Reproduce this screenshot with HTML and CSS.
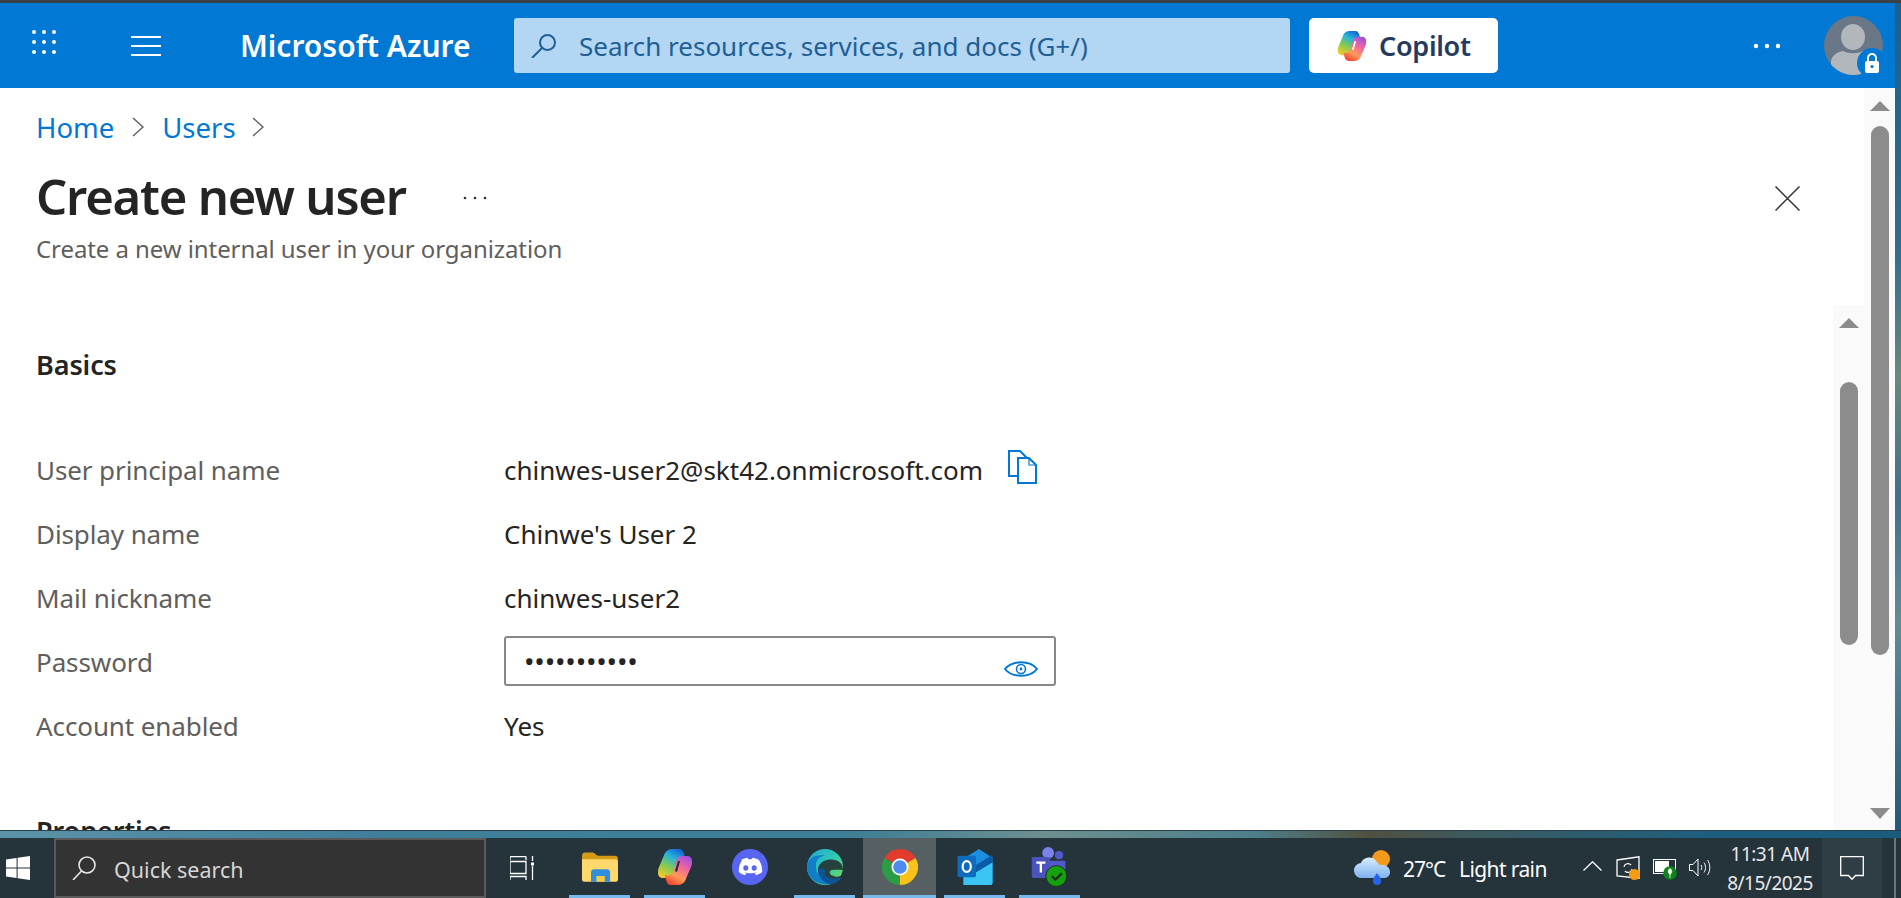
FILE: index.html
```html
<!DOCTYPE html>
<html lang="en">
<head>
    <meta charset="UTF-8">
    <meta name="viewport" content="width=device-width, initial-scale=1.0">
    <title>Create new user - Microsoft Azure</title>
    <link rel="stylesheet" href="styles.css">
</head>
<body>

<svg class="defs" width="0" height="0">
    <defs>
        <linearGradient id="copilotLeft" x1="0.7" y1="0" x2="0.2" y2="1">
            <stop offset="0" stop-color="#1668dc"/>
            <stop offset="0.3" stop-color="#27b5d8"/>
            <stop offset="0.65" stop-color="#8ccb4a"/>
            <stop offset="1" stop-color="#f5c92f"/>
        </linearGradient>
        <linearGradient id="copilotRight" x1="0.3" y1="1" x2="0.8" y2="0">
            <stop offset="0" stop-color="#f04a30"/>
            <stop offset="0.3" stop-color="#ff9a58"/>
            <stop offset="0.65" stop-color="#ee62a4"/>
            <stop offset="1" stop-color="#9a52e0"/>
        </linearGradient>
        <linearGradient id="edgeTop" x1="0" y1="0" x2="1" y2="0.8">
            <stop offset="0" stop-color="#1fa8d8"/>
            <stop offset="0.6" stop-color="#33c8b0"/>
            <stop offset="1" stop-color="#6ada5e"/>
        </linearGradient>
        <linearGradient id="cloud" x1="0" y1="0" x2="0" y2="1">
            <stop offset="0" stop-color="#d8ecff"/>
            <stop offset="1" stop-color="#7fb2f0"/>
        </linearGradient>
        <symbol id="copilot" viewBox="0 0 34 36">
            <path fill="url(#copilotLeft)" d="M14 0h7c3 0 4 2 5 5l1 5c-4-1-7 0-8 3l-4 13c-1 2-2 3-5 3H5c-3 0-5-2-5-5 0-2 0-4 1-6l6-14c1-2 4-4 7-4z"/>
            <path fill="url(#copilotRight)" d="M20 36h-7c-3 0-4-2-5-5l-1-5c4 1 7 0 8-3l4-13c1-2 2-3 5-3h5c3 0 5 2 5 5 0 2 0 4-1 6l-6 14c-1 2-4 4-7 4z"/>
            <path class="copilot-slit" d="M17 22l3-10h2l-3 11z"/>
        </symbol>
    </defs>
</svg>

<div class="top-strip"></div>

<div class="desktop-row">
    <div class="window">
        <header class="portal-bar">
            <svg class="icon-grid" viewBox="0 0 24 24" fill="#fff">
                <circle cx="2" cy="2" r="2"/><circle cx="12" cy="2" r="2"/><circle cx="22" cy="2" r="2"/>
                <circle cx="2" cy="12" r="2"/><circle cx="12" cy="12" r="2"/><circle cx="22" cy="12" r="2"/>
                <circle cx="2" cy="22" r="2"/><circle cx="12" cy="22" r="2"/><circle cx="22" cy="22" r="2"/>
            </svg>
            <svg class="icon-menu" viewBox="0 0 30 20" stroke="#fff" stroke-width="2">
                <path d="M0 1h30M0 10h30M0 19h30"/>
            </svg>
            <div class="brand">Microsoft Azure</div>
            <div class="search">
                <svg class="icon-search" viewBox="0 0 26 24" fill="none" stroke="#1e5f96" stroke-width="2">
                    <circle cx="16.5" cy="8.5" r="7.5"/>
                    <path d="M11 14L1 24"/>
                </svg>
                <span>Search resources, services, and docs (G+/)</span>
            </div>
            <div class="copilot-btn">
                <svg class="icon-copilot"><use href="#copilot"/></svg>
                <span>Copilot</span>
            </div>
            <svg class="icon-more" viewBox="0 0 28 6" fill="#fff">
                <circle cx="3" cy="3" r="2.2"/><circle cx="14" cy="3" r="2.2"/><circle cx="25" cy="3" r="2.2"/>
            </svg>
            <svg class="avatar" viewBox="0 0 59 59">
                <defs><clipPath id="avatarClip"><circle cx="29.5" cy="29.5" r="29.5"/></clipPath></defs>
                <g clip-path="url(#avatarClip)">
                    <rect width="59" height="59" fill="#6a7787"/>
                    <ellipse cx="29" cy="21" rx="12" ry="13" fill="#b2b7bc"/>
                    <path d="M7 59V46c0-6 6-10 12-11 6 3 14 3 20 0 6 1 12 5 12 11v13z" fill="#b2b7bc"/>
                </g>
                <circle cx="48" cy="47" r="15" fill="#0078d4"/>
                <rect x="41" y="45" width="14" height="12" rx="2" fill="#fff"/>
                <path d="M44 45v-3a4 4 0 0 1 8 0v3" fill="none" stroke="#fff" stroke-width="2"/>
                <circle cx="48" cy="50.5" r="1.6" fill="#0078d4"/>
            </svg>
        </header>

        <main class="portal-main">
            <div class="blade">
                <div class="blade-head">
                    <nav class="breadcrumb">
                        <a>Home</a>
                        <svg class="chevron" viewBox="0 0 12 20" fill="none" stroke="#605e5c" stroke-width="1.4"><path d="M1 1l10 9-10 9"/></svg>
                        <a>Users</a>
                        <svg class="chevron chevron-last" viewBox="0 0 12 20" fill="none" stroke="#605e5c" stroke-width="1.4"><path d="M1 1l10 9-10 9"/></svg>
                    </nav>
                    <div class="title-row">
                        <h1>Create new user</h1>
                        <svg class="icon-title-more" viewBox="0 0 24 4" fill="#323130">
                            <circle cx="2" cy="2" r="1.3"/><circle cx="12" cy="2" r="1.3"/><circle cx="22" cy="2" r="1.3"/>
                        </svg>
                        <svg class="icon-close" viewBox="0 0 25 25" stroke="#323130" stroke-width="1.5">
                            <path d="M0.5 0.5l24 24M24.5 0.5l-24 24"/>
                        </svg>
                    </div>
                    <p class="subtitle">Create a new internal user in your organization</p>
                </div>

                <div class="blade-body">
                    <div class="review">
                        <h2 class="section first">Basics</h2>
                        <div class="rows">
                            <div class="row">
                                <div class="label">User principal name</div>
                                <div class="value">chinwes-user2@skt42.onmicrosoft.com
                                    <svg class="icon-copy" viewBox="0 0 29 34" fill="none" stroke="#0078d4" stroke-width="2">
                                        <path d="M10 26H1V1h11l7 7"/>
                                        <path d="M10 8h11l7 7v18H10z"/>
                                        <path d="M21 8v7h7" stroke-width="1.2"/>
                                    </svg>
                                </div>
                            </div>
                            <div class="row">
                                <div class="label">Display name</div>
                                <div class="value">Chinwe's User 2</div>
                            </div>
                            <div class="row">
                                <div class="label">Mail nickname</div>
                                <div class="value">chinwes-user2</div>
                            </div>
                            <div class="row">
                                <div class="label">Password</div>
                                <div class="password">
                                    <span class="bullets">•••••••••••</span>
                                    <svg class="icon-eye" viewBox="0 0 34 16" fill="none" stroke="#0078d4" stroke-width="2">
                                        <path d="M1 8c7-9 25-9 32 0-7 9-25 9-32 0z"/>
                                        <circle cx="17" cy="8" r="4.5" stroke-width="1.6"/>
                                        <circle cx="17" cy="8" r="1.4" fill="#0078d4" stroke="none"/>
                                    </svg>
                                </div>
                            </div>
                            <div class="row">
                                <div class="label">Account enabled</div>
                                <div class="value">Yes</div>
                            </div>
                        </div>
                        <h2 class="section">Properties</h2>
                    </div>
                    <div class="scroll scroll-inner">
                        <div class="arrow-up"></div>
                        <div class="thumb thumb-inner"></div>
                    </div>
                </div>
            </div>
            <div class="scroll scroll-outer">
                <div class="arrow-up"></div>
                <div class="thumb thumb-outer"></div>
                <div class="arrow-down"></div>
            </div>
        </main>
    </div>
    <div class="wall-edge"></div>
</div>

<div class="wall-strip"></div>

<footer class="taskbar">
    <svg class="icon-start" viewBox="0 0 24 24" fill="#fff">
        <path d="M0 3.4l10.6-1.5v9.5H0zM11.6 1.8L24 0v11.4H11.6zM0 12.5h10.6v9.6L0 20.6zM11.6 12.5H24V24l-12.4-1.8z"/>
    </svg>
    <div class="quick-search">
        <svg class="icon-quick" viewBox="0 0 24 24" fill="none" stroke="#e6e6e6" stroke-width="1.6">
            <circle cx="15" cy="9" r="8"/>
            <path d="M9.5 15L1 24"/>
        </svg>
        <span>Quick search</span>
    </div>
    <svg class="icon-taskview" viewBox="0 0 24 24" fill="none" stroke="#fff" stroke-width="1.3">
        <path d="M0 4V0.6M16 4V0.6M0 .6h16M0 5.5h16v12H0zM0 24v-3.5h16V24M22.5 0v5M22.5 10v14"/>
        <rect x="21" y="6.5" width="3" height="3" fill="#fff" stroke="none"/>
    </svg>

    <div class="apps">
        <div class="app open">
            <svg class="icon-app" viewBox="0 0 32 26">
                <path d="M0 3a3 3 0 0 1 3-3h7l4 3h15a3 3 0 0 1 3 3v4H0z" fill="#d49c16"/>
                <path d="M0 6h29a3 3 0 0 1 3 3v15a2 2 0 0 1-2 2H2a2 2 0 0 1-2-2z" fill="#ffd96b"/>
                <path d="M8 26V18a3 3 0 0 1 3-3h11a3 3 0 0 1 3 3v8h-5v-5h-7v5z" fill="#2f8fdc"/>
                <rect x="13" y="21" width="7" height="5" fill="#f7c93f"/>
            </svg>
        </div>
        <div class="app open">
            <svg class="icon-app icon-taskcopilot"><use href="#copilot"/></svg>
        </div>
        <div class="app">
            <svg class="icon-app" viewBox="0 0 36 36">
                <circle cx="18" cy="18" r="18" fill="#5865f2"/>
                <path d="M9 11c2.500-1.300 5-2 6.500-2.200l.8 1.500c1.100-.2 2.300-.2 3.400 0l.8-1.500c1.500.2 4 .9 6.500 2.200 2.400 3.800 3.500 7.800 3.200 12-2.200 1.700-4.300 2.700-6.300 3.300l-1.400-2.200c.8-.3 1.500-.7 2.200-1.200-3.800 1.900-8.600 1.900-12.400 0 .7.500 1.400.9 2.200 1.200l-1.400 2.200c-2-.6-4.100-1.600-6.300-3.300-.3-4.200.8-8.200 3.200-12z" fill="#fff"/>
                <ellipse cx="13.800" cy="19" rx="2.500" ry="2.800" fill="#5865f2"/>
                <ellipse cx="22.200" cy="19" rx="2.500" ry="2.800" fill="#5865f2"/>
            </svg>
        </div>
        <div class="app open">
            <svg class="icon-app" viewBox="0 0 36 36">
                <circle cx="18" cy="18" r="18" fill="url(#edgeTop)"/>
                <path d="M36 21c0-6.500-5-10.500-12-10.500-9 0-13 5.500-13 10.500 0 6.500 5 11.500 11 14 7-1 12-5 14-9-3 1.600-7 2.500-10 .8-3-.8-4-3.300-3-4.900 2-1.600 8-.9 13-.9z" fill="#25282c" opacity="0.85"/>
                <path d="M0 18C0 10 8 5 18 6.500c-6 .8-10 5-9 11.500 0 6.500 5 12.300 13 17.200C10 36.800 0 28.600 0 18z" fill="#0f7fc8"/>
                <path d="M11 21.300c0 6.500 5 11.500 11 13.900 6 0 11-3.300 13-7.400-3 1.600-7 2.500-10 1.600-6-.8-8-4.100-7-7.400 0-2.400-3-4.100-7-.7z" fill="#0c5495"/>
            </svg>
        </div>
        <div class="app open active">
            <svg class="icon-app" viewBox="0 0 36 36">
                <path d="M18 18L33.600 9A18 18 0 0 0 2.400 9z" fill="#e33b2e"/>
                <path d="M18 18L2.400 9A18 18 0 0 0 18 36z" fill="#2c9c45"/>
                <path d="M18 18L18 36A18 18 0 0 0 33.600 9z" fill="#fbc11b"/>
                <circle cx="18" cy="18" r="8.500" fill="#fff"/>
                <circle cx="18" cy="18" r="6.800" fill="#4a8cf0"/>
            </svg>
        </div>
        <div class="app open">
            <svg class="icon-app" viewBox="0 0 36 37">
                <path d="M6 10L22 0l14 9v26a2 2 0 0 1-2 2H14a2 2 0 0 1-2-2z" fill="#1c8ee0"/>
                <path d="M36 6v8L16 27l-6-5z" fill="#0a5ba8"/>
                <path d="M6 37V22l8 5 22-13v21a2 2 0 0 1-2 2z" fill="#3ac4f4"/>
                <rect x="0" y="7" width="19" height="22" rx="1.500" fill="#0f6cbd"/>
                <ellipse cx="9.500" cy="18" rx="4.200" ry="5.500" fill="none" stroke="#fff" stroke-width="2.200"/>
            </svg>
        </div>
        <div class="app open">
            <svg class="icon-app icon-teams" viewBox="0 0 39 44">
                <circle cx="18" cy="6.500" r="6.500" fill="#7b83eb"/>
                <circle cx="30" cy="9" r="4.500" fill="#5059c9"/>
                <path d="M14 15h22a1 1 0 0 1 1 1v12H14z" fill="#5059c9"/>
                <rect x="0" y="11" width="20" height="23" rx="1.500" fill="#4b53bc"/>
                <path d="M5 16h10v2.500h-3.700V28H8.700v-9.500H5z" fill="#fff"/>
                <circle cx="27" cy="32" r="11.500" fill="#13a10e" stroke="#1f2a20" stroke-width="1"/>
                <path d="M22 32l4 4 7-7" fill="none" stroke="#1c2b1c" stroke-width="2.400"/>
            </svg>
        </div>
    </div>

    <div class="weather">
        <svg class="icon-weather" viewBox="0 0 36 36">
            <circle cx="27" cy="9" r="9" fill="#f19a1b"/>
            <path d="M8 28a7.500 7.500 0 0 1-1-15c2-6 12-8 16-1 1 1 2 2 2 3 6-1 11 2 11 7 0 4-3 6-6 6z" fill="url(#cloud)"/>
            <path d="M23 23c3 4 4 6 4 8a4 4 0 0 1-8 0c0-2 1-4 4-8z" fill="#2563e8"/>
        </svg>
        <span class="temp">27°C</span>
        <span class="cond">Light rain</span>
    </div>
    <svg class="icon-chevup" viewBox="0 0 19 10" fill="none" stroke="#fff" stroke-width="1.3"><path d="M0.500 9.500L9.500 0.800l9 8.700"/></svg>
    <svg class="icon-update" viewBox="0 0 24 24">
        <path d="M1 4L23 .8v21.400L1 20z" fill="none" stroke="#fff" stroke-width="1.300"/>
        <path d="M8 11a4 4 0 0 1 7-2m1 4a4 4 0 0 1-7 2" fill="none" stroke="#fff" stroke-width="1.200"/>
        <circle cx="18.500" cy="18.500" r="5.500" fill="#f59a12"/>
    </svg>
    <svg class="icon-battery" viewBox="0 0 24 21">
        <rect x="0.500" y="0.500" width="22" height="14" fill="none" stroke="#fff"/>
        <rect x="2" y="2" width="14" height="11" fill="#fff"/>
        <circle cx="17" cy="14" r="6.800" fill="#10841c"/>
        <path d="M17 9.500c2 1.500 2.500 3.500 0 6-2.500-2.500-2-4.500 0-6zM17 12v7" fill="#fff" stroke="#fff" stroke-width="0.800"/>
    </svg>
    <svg class="icon-speaker" viewBox="0 0 22 19" fill="none" stroke="#fff" stroke-width="1">
        <path d="M.5 6.500h3.500L9 1v17l-5-5.500H.5z"/>
        <path d="M12 7c1 1.500 1 3.500 0 5M15 4.500c2 3 2 7 0 10M18.500 2c3 4 3 11 0 15"/>
    </svg>
    <div class="clock">
        <div>11:31 AM</div>
        <div>8/15/2025</div>
    </div>
    <div class="notify">
        <svg class="icon-notify" viewBox="0 0 24 24" fill="none" stroke="#fff" stroke-width="1.300">
            <path d="M.7 .7h22.600v18.800h-7.800l-3.500 3.800-3.500-3.800H.7z"/>
        </svg>
    </div>
    <div class="show-desktop"></div>
</footer>

</body>
</html>
```

FILE: styles.css
```css
* {
    box-sizing: border-box;
}
html, body {
    margin: 0;
    height: 898px;
    overflow: hidden;
}
body {
    font-family: "Noto Sans", "Open Sans", sans-serif;
    background: #25333b;
    color: #323130;
}
.defs {
    position: absolute;
}
.top-strip {
    height: 3px;
    background: #3c4147;
}
.desktop-row {
    display: flex;
    height: 827px;
}
.window {
    width: 1895px;
    display: flex;
    flex-direction: column;
    background: #fff;
}
.wall-edge {
    flex: 1;
    background: linear-gradient(180deg, #1c5f8a 0%, #2d6f8f 30%, #68897f 45%, #3f7189 60%, #5f8d97 75%, #1f5a78 100%);
}
.wall-strip {
    height: 8px;
    border-top: 1px solid #2c3e48;
    background: linear-gradient(90deg, #5c93a8 0%, #3f7f9b 20%, #3d7f96 45%, #6d8f90 55%, #4d7f8a 66%, #51503f 72%, #3b5a60 78%, #1d5f80 90%, #1a5b7c 100%);
}

/* portal bar */
.portal-bar {
    height: 85px;
    flex: none;
    display: flex;
    align-items: center;
    background: #0078d4;
    padding-left: 32px;
}
.icon-grid {
    width: 24px;
    height: 24px;
    margin-bottom: 7px;
}
.icon-menu {
    width: 30px;
    height: 20px;
    margin-left: 75px;
}
.brand {
    width: 274px;
    margin-left: 79px;
    color: #fff;
    font-size: 30px;
    font-weight: 600;
}
.search {
    width: 776px;
    height: 55px;
    display: flex;
    align-items: center;
    padding-left: 17px;
    background: #b3d6f2;
    border-radius: 3px;
    color: #1e5f96;
    font-size: 26px;
}
.icon-search {
    width: 26px;
    height: 24px;
    margin-right: 22px;
}
.copilot-btn {
    width: 189px;
    height: 55px;
    margin-left: 19px;
    display: flex;
    align-items: center;
    padding-left: 26px;
    background: #fff;
    border-radius: 5px;
    color: #243a5e;
    font-size: 27px;
    font-weight: 600;
    letter-spacing: -0.3px;
}
.icon-copilot {
    width: 34px;
    height: 30px;
    margin-right: 10px;
    --slit: #fff;
}
.copilot-slit {
    fill: var(--slit);
}
.icon-more {
    width: 28px;
    height: 6px;
    margin-left: 255px;
}
.avatar {
    width: 59px;
    height: 59px;
    margin-left: 43px;
}

/* blade */
.portal-main {
    flex: 1;
    display: flex;
    overflow: hidden;
}
.blade {
    flex: 1;
    display: flex;
    flex-direction: column;
}
.blade-head {
    height: 217px;
    flex: none;
    padding: 19px 64px 0 36px;
}
.breadcrumb {
    height: 40px;
    display: flex;
    align-items: center;
    color: #0078d4;
    font-size: 27.5px;
}
.chevron {
    width: 12px;
    height: 20px;
    margin: 0 18px;
}
.chevron-last {
    margin-left: 16px;
}
.title-row {
    height: 60px;
    margin-top: 19px;
    display: flex;
    align-items: center;
}
h1 {
    margin: 0;
    font-size: 49px;
    font-weight: 600;
    letter-spacing: -1.2px;
    color: #242424;
}
.icon-title-more {
    width: 24px;
    height: 4px;
    margin-left: 57px;
    margin-top: 4px;
}
.icon-close {
    width: 25px;
    height: 25px;
    margin-left: auto;
    margin-top: 4px;
}
.subtitle {
    margin: 6px 0 0;
    line-height: 34px;
    font-size: 24px;
    letter-spacing: -0.08px;
    color: #605e5c;
}
.blade-body {
    flex: 1;
    display: flex;
    min-height: 0;
}
.review {
    flex: 1;
    padding-left: 36px;
}
.section {
    margin: 56px 0 0;
    line-height: 34px;
    font-size: 27px;
    font-weight: 600;
    letter-spacing: -0.1px;
    color: #242424;
}
.section.first {
    margin-top: 43px;
}
.rows {
    margin-top: 56px;
}
.row {
    height: 64px;
    display: flex;
    align-items: center;
    font-size: 26px;
}
.label {
    width: 468px;
    letter-spacing: -0.1px;
    color: #605e5c;
}
.value {
    display: flex;
    align-items: center;
    color: #252423;
}
.icon-copy {
    width: 29px;
    height: 34px;
    margin-left: 25px;
    margin-top: -6px;
}
.password {
    width: 552px;
    height: 50px;
    margin-top: -2px;
    display: flex;
    align-items: center;
    justify-content: space-between;
    padding: 0 16px 0 18px;
    border: 2px solid #8a8886;
    border-radius: 3px;
}
.bullets {
    letter-spacing: -0.2px;
    font-size: 28px;
    color: #252423;
}
.icon-eye {
    width: 34px;
    height: 16px;
    margin-top: 16px;
}

/* scroll bars */
.scroll {
    width: 31px;
    flex: none;
    display: flex;
    flex-direction: column;
    align-items: center;
    padding-top: 13px;
    background: #fafafa;
}
.arrow-up, .arrow-down {
    width: 0;
    height: 0;
    border-left: 10.5px solid transparent;
    border-right: 10.5px solid transparent;
}
.arrow-up {
    border-bottom: 10px solid #8c8c8c;
}
.arrow-down {
    border-top: 11px solid #8c8c8c;
    margin-top: auto;
    margin-bottom: 11px;
}
.thumb {
    width: 18px;
    border-radius: 9px;
    background: #8c8c8c;
}
.thumb-inner {
    height: 263px;
    margin-top: 54px;
}
.thumb-outer {
    height: 529px;
    margin-top: 15px;
}

/* taskbar */
.taskbar {
    height: 60px;
    display: flex;
    align-items: center;
    padding-left: 6px;
    background: #25333b;
    color: #fff;
}
.icon-start {
    width: 24px;
    height: 24px;
    flex: none;
}
.quick-search {
    width: 432px;
    height: 60px;
    margin-left: 24px;
    display: flex;
    align-items: center;
    padding: 2px 0 0 16px;
    background: #333;
    border: 2px solid #5a5a5a;
    color: #d6d6d6;
    font-size: 21.5px;
}
.icon-quick {
    width: 24px;
    height: 24px;
    margin-right: 18px;
    margin-top: -2px;
}
.icon-taskview {
    width: 24px;
    height: 24px;
    margin-left: 24px;
}
.apps {
    margin-left: 35px;
    display: flex;
    gap: 14px;
}
.app {
    width: 61px;
    height: 60px;
    display: flex;
    align-items: center;
    justify-content: center;
    padding-top: 1px;
    border-bottom: 3px solid transparent;
}
.app.open {
    border-bottom-color: #76b9ed;
}
.app.active {
    width: 73px;
    margin: 0 -6px;
    background: #565f62;
}
.icon-app {
    width: 36px;
    height: 36px;
}
.icon-taskcopilot {
    --slit: #2b2b3a;
}
.icon-teams {
    width: 39px;
    height: 40px;
}
.weather {
    margin-left: 274px;
    display: flex;
    align-items: center;
    padding-top: 2px;
    font-size: 21px;
}
.icon-weather {
    width: 36px;
    height: 36px;
    margin-right: 13px;
    margin-top: -2px;
}
.temp {
    width: 56px;
    letter-spacing: -1px;
}
.cond {
    width: 124px;
    letter-spacing: -0.6px;
}
.icon-chevup {
    width: 19px;
    height: 10px;
    margin-top: -4px;
}
.icon-update {
    width: 24px;
    height: 24px;
    margin-left: 14px;
}
.icon-battery {
    width: 24px;
    height: 21px;
    margin-left: 13px;
    margin-top: 3px;
}
.icon-speaker {
    width: 22px;
    height: 19px;
    margin-left: 12px;
    margin-top: -2px;
}
.clock {
    width: 100px;
    height: 60px;
    margin-left: 9px;
    padding-top: 2px;
    text-align: center;
    font-size: 19px;
    line-height: 29px;
    letter-spacing: -0.5px;
    color: #e8e8e8;
}
.notify {
    width: 60px;
    height: 60px;
    margin-left: 2px;
    display: flex;
    align-items: center;
    justify-content: center;
    background: #2f3e45;
}
.icon-notify {
    width: 24px;
    height: 24px;
}
.show-desktop {
    width: 2px;
    height: 60px;
    margin-left: 12px;
    background: #6b767b;
}
```
